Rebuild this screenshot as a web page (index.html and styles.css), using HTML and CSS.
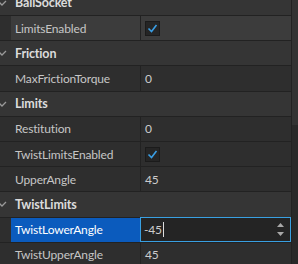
FILE: index.html
```html
<!DOCTYPE html>
<html lang="en">
<head>
    <meta charset="UTF-8">
    <title>Properties</title>
    <link rel="stylesheet" href="styles.css">
</head>
<body>
    <div class="panel">
        <div class="rows">
            <div class="row header first">
                <span class="gutter"><svg class="chev" width="11" height="8" viewBox="0 0 11 8"><path d="M-2 2 L2 6 L6 2" fill="none" stroke="#9a9a9a" stroke-width="1.3"/></svg></span>
                <span class="title">BallSocket</span>
            </div>
            <div class="row prop hover">
                <span class="gutter"></span>
                <span class="name">LimitsEnabled</span>
                <span class="value"><span class="check"><svg width="13" height="13" viewBox="0 0 13 13"><path d="M2.5 6.5 L5.5 9.5 L10.5 3" fill="none" stroke="#3a9ee4" stroke-width="1.6"/></svg></span></span>
            </div>
            <div class="row header">
                <span class="gutter"><svg class="chev" width="11" height="8" viewBox="0 0 11 8"><path d="M-2 2 L2 6 L6 2" fill="none" stroke="#9a9a9a" stroke-width="1.3"/></svg></span>
                <span class="title">Friction</span>
            </div>
            <div class="row prop">
                <span class="gutter"></span>
                <span class="name">MaxFrictionTorque</span>
                <span class="value">0</span>
            </div>
            <div class="row header">
                <span class="gutter"><svg class="chev" width="11" height="8" viewBox="0 0 11 8"><path d="M-2 2 L2 6 L6 2" fill="none" stroke="#9a9a9a" stroke-width="1.3"/></svg></span>
                <span class="title">Limits</span>
            </div>
            <div class="row prop">
                <span class="gutter"></span>
                <span class="name">Restitution</span>
                <span class="value">0</span>
            </div>
            <div class="row prop">
                <span class="gutter"></span>
                <span class="name">TwistLimitsEnabled</span>
                <span class="value"><span class="check"><svg width="13" height="13" viewBox="0 0 13 13"><path d="M2.5 6.5 L5.5 9.5 L10.5 3" fill="none" stroke="#3a9ee4" stroke-width="1.6"/></svg></span></span>
            </div>
            <div class="row prop">
                <span class="gutter"></span>
                <span class="name">UpperAngle</span>
                <span class="value">45</span>
            </div>
            <div class="row header">
                <span class="gutter"><svg class="chev" width="11" height="8" viewBox="0 0 11 8"><path d="M-2 2 L2 6 L6 2" fill="none" stroke="#9a9a9a" stroke-width="1.3"/></svg></span>
                <span class="title">TwistLimits</span>
            </div>
            <div class="row prop selected">
                <span class="gutter"></span>
                <span class="name">TwistLowerAngle</span>
                <span class="value editing">
                    <span class="input">-45<span class="caret"></span></span>
                    <span class="spin">
                        <svg width="7" height="5" viewBox="0 0 7 5"><path d="M0 5 L3.5 1 L7 5 Z" fill="#a8a8a8"/></svg>
                        <svg width="7" height="5" viewBox="0 0 7 5"><path d="M0 0 L3.5 4 L7 0 Z" fill="#a8a8a8"/></svg>
                    </span>
                </span>
            </div>
            <div class="row prop">
                <span class="gutter"></span>
                <span class="name">TwistUpperAngle</span>
                <span class="value">45</span>
            </div>
        </div>
        <div class="scrollbar">
            <div class="thumb"></div>
        </div>
    </div>
</body>
</html>
```

FILE: styles.css
```css
body {
    margin: 0;
    padding: 0;
    background-color: #2e2e2e;
    font-family: Lato, "Liberation Sans", sans-serif;
    font-size: 12px;
    letter-spacing: -0.15px;
    overflow: hidden;
}
.panel {
    display: flex;
    width: 298px;
    height: 264px;
    overflow: hidden;
}
.rows {
    width: 292px;
    display: flex;
    flex-direction: column;
}
.row {
    display: flex;
    height: 24.2px;
    flex-shrink: 0;
    border-bottom: 1px solid #222222;
    align-items: stretch;
}
.row.first {
    margin-top: -9.2px;
}
.gutter {
    width: 11px;
    flex-shrink: 0;
    display: flex;
    align-items: center;
}
.chev {
    display: block;
}
.header {
    background-color: #353535;
}
.header .title {
    padding-left: 4px;
    font-weight: bold;
    font-size: 12.5px;
    color: #dcdcdc;
    display: flex;
    align-items: center;
}
.prop {
    background-color: #2e2e2e;
}
.prop .name {
    width: 125px;
    padding-left: 4px;
    color: #c6c6c6;
    display: flex;
    align-items: center;
    border-right: 1px solid #222222;
}
.prop .value {
    flex: 1;
    padding-left: 4px;
    color: #cccccc;
    display: flex;
    align-items: center;
}
.hover .name, .hover .value {
    background-color: #3c3c3c;
}
.selected .name {
    background-color: #0b5bbd;
    color: #ffffff;
}
.check {
    width: 13px;
    height: 13px;
    background-color: #252525;
    border: 1px solid #1b1b1b;
    display: flex;
}
.value.editing {
    padding-left: 0;
    background-color: #242424;
    border: 1px solid #39a0e2;
    margin: -1px 0 0 -1px;
    justify-content: space-between;
}
.input {
    padding-left: 3px;
    display: flex;
    align-items: center;
}
.caret {
    width: 1px;
    height: 15px;
    background-color: #dddddd;
    margin-left: 1px;
}
.spin {
    display: flex;
    flex-direction: column;
    gap: 5px;
    padding-right: 6px;
}
.scrollbar {
    width: 6px;
    background-color: #292929;
    border-left: 1px solid #222222;
}
.thumb {
    height: 125px;
    background-color: #333333;
}
```
